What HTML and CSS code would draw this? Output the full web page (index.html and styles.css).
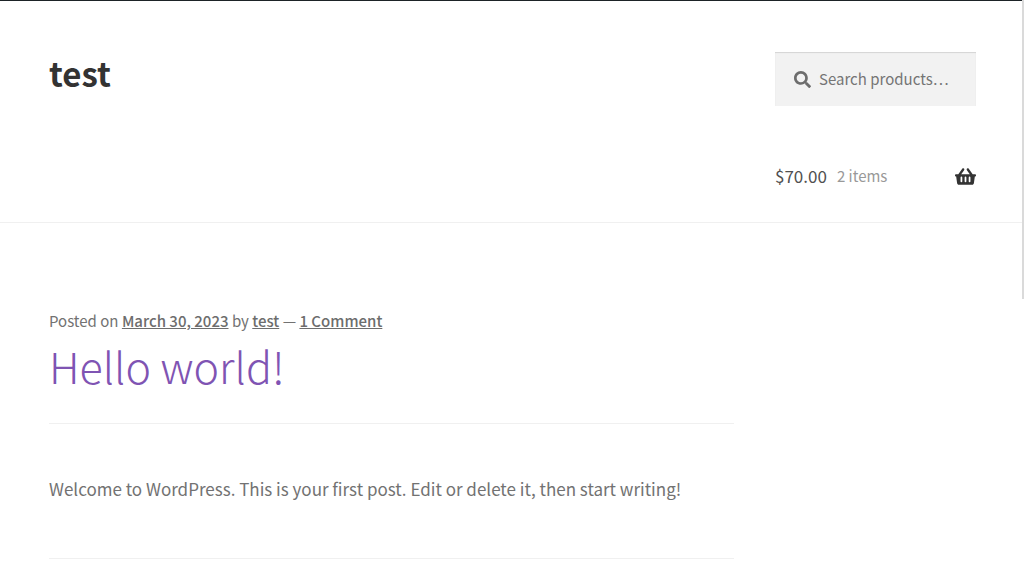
FILE: index.html
```
<!DOCTYPE html>
<html lang="en">
<head>
<meta charset="utf-8">
<meta name="viewport" content="width=device-width, initial-scale=1">
<title>test</title>
<link rel="stylesheet" href="styles.css">
</head>
<body>
<div class="scroll-thumb"></div>
<header class="site-header">
  <a class="site-title" href="#">test</a>
  <div class="header-tools">
    <form class="search" role="search">
      <svg class="search-icon" viewBox="0 0 512 512" aria-hidden="true"><path d="M505 442.7L405.3 343c-4.5-4.5-10.6-7-17-7H372c27.6-35.3 44-79.7 44-128C416 93.1 322.9 0 208 0S0 93.1 0 208s93.1 208 208 208c48.3 0 92.7-16.4 128-44v16.3c0 6.4 2.5 12.5 7 17l99.7 99.7c9.4 9.4 24.6 9.4 33.9 0l28.3-28.3c9.4-9.4 9.4-24.6.1-34zM208 336c-70.7 0-128-57.2-128-128s57.2-128 128-128 128 57.2 128 128-57.2 128-128 128z"/></svg>
      <input class="search-field" type="search" placeholder="Search products…" aria-label="Search products">
    </form>
    <a class="cart" href="#" aria-label="View your shopping cart">
      <span class="cart-amount">$70.00</span>
      <span class="cart-count">2 items</span>
      <svg class="cart-icon" viewBox="0 0 576 512" aria-hidden="true"><path d="M576 216v16c0 13.255-10.745 24-24 24h-8l-26.113 182.788C514.509 462.435 494.257 480 470.37 480H105.63c-23.887 0-44.139-17.565-47.518-41.212L32 256h-8c-13.255 0-24-10.745-24-24v-16c0-13.255 10.745-24 24-24h67.341l106.78-146.821c10.395-14.292 30.407-17.453 44.701-7.058 14.293 10.395 17.453 30.408 7.058 44.701L170.477 192h235.046L326.12 82.821c-10.395-14.292-7.234-34.306 7.059-44.701 14.291-10.395 34.306-7.235 44.701 7.058L484.659 192H552c13.255 0 24 10.745 24 24zM312 392V280c0-13.255-10.745-24-24-24s-24 10.745-24 24v112c0 13.255 10.745 24 24 24s24-10.745 24-24zm112 0V280c0-13.255-10.745-24-24-24s-24 10.745-24 24v112c0 13.255 10.745 24 24 24s24-10.745 24-24zm-224 0V280c0-13.255-10.745-24-24-24s-24 10.745-24 24v112c0 13.255 10.745 24 24 24s24-10.745 24-24z"/></svg>
    </a>
  </div>
</header>
<main class="site-content">
  <article class="post">
    <header class="post-header">
      <p class="post-meta">Posted on <a href="#">March 30, 2023</a> by <a href="#">test</a> — <a href="#">1 Comment</a></p>
      <h2 class="post-title"><a href="#">Hello world!</a></h2>
    </header>
    <p class="post-body">Welcome to WordPress. This is your first post. Edit or delete it, then start writing!</p>
  </article>
</main>
</body>
</html>
```
FILE: styles.css
```
* { box-sizing: border-box; }

body {
  margin: 0;
  border-top: 1px solid #1d2327;
  background: #fff;
  color: #727272;
  font-family: "Source Sans Pro", "Noto Sans CJK SC", sans-serif;
  font-size: 17px;
  line-height: 28px;
}

.scroll-thumb {
  position: absolute;
  top: 0;
  right: 0;
  width: 2px;
  height: 299px;
  background: #dadada;
}

.site-header,
.site-content {
  display: grid;
  grid-template-columns: minmax(0, 685fr) minmax(0, 201fr);
  column-gap: 41px;
  padding: 0 48px 0 49px;
}

.site-header {
  padding-top: 51px;
  padding-bottom: 32px;
  border-bottom: 1px solid #f0f0f0;
}

.site-title {
  justify-self: start;
  align-self: start;
  color: #333;
  font-size: 33px;
  font-weight: 700;
  line-height: 42px;
  text-decoration: none;
}

.search {
  display: flex;
  align-items: center;
  gap: 8px;
  height: 54px;
  padding: 0 18px 0 19px;
  background: #f2f2f2;
  box-shadow: inset 0 1px 1px rgba(0, 0, 0, 0.125);
}

.search-icon {
  flex: none;
  width: 17px;
  height: 17px;
  fill: #6d6d6d;
}

.search-field {
  flex: 1;
  min-width: 0;
  height: 24px;
  padding: 0 0 2px;
  border: 0;
  background: none;
  color: #43454b;
  font-family: inherit;
  font-size: 15px;
  outline: none;
}

.search-field::-webkit-search-cancel-button { display: none; }

.search-field::placeholder { color: #757575; }

.cart {
  display: flex;
  align-items: center;
  gap: 10px;
  margin-top: 56px;
  color: #505050;
  text-decoration: none;
}

.cart-count {
  color: #999;
  font-size: 15px;
}

.cart-icon {
  width: 21px;
  height: 19px;
  margin-left: auto;
  fill: #333;
}

.site-content { padding-top: 84px; }

.post {
  border-bottom: 1px solid #f0f0f0;
}

.post-header {
  padding-bottom: 28px;
  border-bottom: 1px solid #f0f0f0;
}

.post-meta {
  margin: 0;
  font-size: 15px;
}

.post-meta a {
  color: #6d6d6d;
  font-weight: 500;
  text-decoration: underline;
}

.post-title {
  margin: 0;
  font-size: 43px;
  font-weight: 200;
  line-height: 60px;
}

.post-title a {
  color: #7f54b3;
  text-decoration: none;
}

.post-body {
  margin: 0;
  padding: 51px 0 55px;
}
```
